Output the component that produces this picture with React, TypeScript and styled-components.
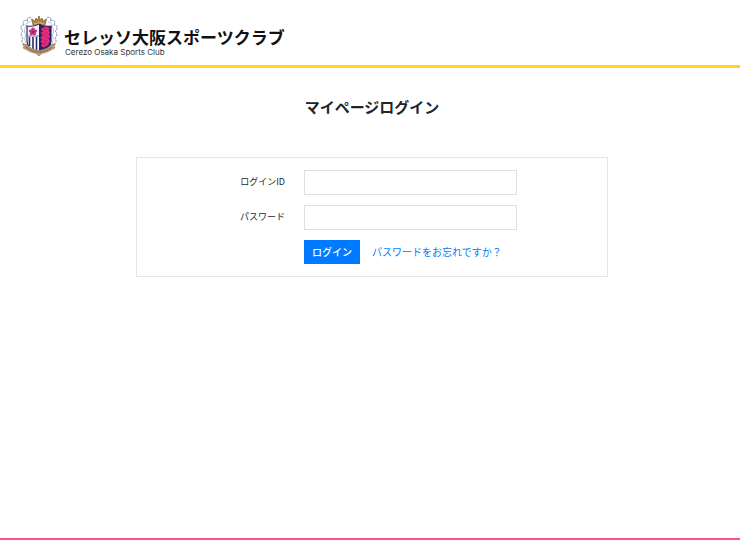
import React from "react";
import styled, { createGlobalStyle } from "styled-components";

const GlobalStyle = createGlobalStyle`
  *, *::before, *::after { box-sizing: border-box; }
  body {
    margin: 0;
    background: #fff;
    color: #212529;
    font-family: "Noto Sans CJK JP", "Liberation Sans", sans-serif;
    font-size: 10px;
    line-height: 16px;
  }
`;

const Page = styled.div`
  display: flex;
  flex-direction: column;
  min-height: 100vh;
`;

const Header = styled.header`
  padding: 15px 20px 8px;
  border-bottom: 3px solid #ffd71a;
`;

const Brand = styled.a`
  display: inline-flex;
  align-items: center;
  gap: 6px;
  color: #111;
  text-decoration: none;
  vertical-align: top;
`;

const BrandText = styled.span`
  display: flex;
  flex-direction: column;
  padding-top: 12px;
`;

const BrandName = styled.span`
  font-size: 17px;
  font-weight: 700;
  line-height: 20px;
`;

const BrandSub = styled.span`
  padding-left: 1px;
  font-family: Inter, "Liberation Sans", sans-serif;
  font-size: 8px;
  line-height: 10px;
  color: #333;
`;

const Main = styled.main`
  flex: 1;
  padding: 27px 18% 0;
  padding-left: calc(18% + 3px);
  padding-right: calc(18% - 1px);
`;

const Title = styled.h1`
  margin: 0 0 38px;
  font-size: 15px;
  font-weight: 700;
  line-height: 24px;
  text-align: center;
`;

const Card = styled.form`
  display: flex;
  flex-direction: column;
  gap: 10px;
  padding: 12px 0;
  border: 1px solid #e6e6e6;
`;

const Row = styled.div`
  display: grid;
  grid-template-columns: 148fr 213fr 71fr;
  column-gap: 19px;
  align-items: center;
`;

const Label = styled.label`
  padding-bottom: 2px;
  font-size: 9px;
  line-height: 14px;
  text-align: right;
`;

const Input = styled.input`
  width: 100%;
  min-width: 0;
  height: 25px;
  padding: 4px 8px;
  border: 1px solid #dce0e5;
  border-radius: 0;
  background: #fff;
  color: inherit;
  font: inherit;
`;

const Actions = styled.div`
  grid-column: 2 / -1;
  display: flex;
  align-items: center;
  gap: 12px;
`;

const Submit = styled.button`
  height: 24px;
  padding: 0 8px;
  border: 0;
  border-radius: 0;
  background: #007bff;
  color: #fff;
  font: inherit;
  font-weight: 500;
  cursor: pointer;
`;

const Link = styled.a`
  color: #007bff;
  text-decoration: none;
`;

const Footer = styled.footer`
  border-top: 2px solid #ff508c;
`;

const Crest = () => (
  <svg width="38" height="42" viewBox="0 0 38 42" role="img" aria-label="セレッソ大阪">
    <g fill="none" stroke="#7d7ba8" strokeWidth="0.9">
      <path d="M11 3C8 1 6 4 8 6C4 4 2 7 4 10C0 10 0 14 3 16C0 18 1 22 3 23C1 26 2 28 4 29" strokeDasharray="2.6 0.8" />
      <path d="M27 3C30 1 32 4 30 6C34 4 36 7 34 10C38 10 38 14 35 16C38 18 37 22 35 23C37 26 36 28 34 29" strokeDasharray="2.6 0.8" />
      <path d="M10 7C7 7 5 10 6 12C4 14 4 18 6 20C4 23 5 26 6 28M28 7C31 7 33 10 32 12C34 14 34 18 32 20C34 23 33 26 32 28" stroke="#b4b3cd" />
    </g>
    <path d="M7 11Q13 12 19 9Q25 12 31 11V26C31 33 26 36 19 38C12 36 7 33 7 26Z" fill="#f4f1fa" stroke="#29286b" strokeWidth="1.2" />
    <path d="M19 9Q25 12 31 11V26C31 33 26 36 19 38Z" fill="#29206b" />
    <path d="M8 20.800H19V37C12 35 8 32 8 26Z" fill="#fff" />
    <path d="M8 21H19" stroke="#29286b" strokeWidth="0.7" />
    <path d="M9.500 22V31M13 22V34.500M16.500 22V36" stroke="#29286b" strokeWidth="1.6" />
    <g fill="#c72f80">
      <circle cx="13" cy="14.3" r="1.7" />
      <circle cx="15.4" cy="16.1" r="1.7" />
      <circle cx="14.5" cy="18.600" r="1.7" />
      <circle cx="11.5" cy="18.600" r="1.7" />
      <circle cx="10.6" cy="16.1" r="1.7" />
      <circle cx="13" cy="16.9" r="1.3" fill="#8c246e" />
    </g>
    <path d="M22 13L25 11.500L28 12L30 13.500L28.500 15.500L30 17L29 19L30 22L28.500 23.500L30 26L28 30L24 32.500L21 31L22.500 28L20.500 27L22 24.500L20.300 22.500L22.500 20.500L20.500 17.500L23.500 17L21 15Z" fill="#e62c78" />
    <path d="M24 14.500L26.500 14M22.500 19L25 21M24 25L27 26.500M27 17L25.500 19M27.500 21L26 23M23 29L26 29" stroke="#7a2067" strokeWidth="0.6" />
    <path d="M13 10L11.500 4L15 6L16 3L18 5L19 1L20 5L22 3L23 6L26.500 4L25 10Q19 7.500 13 10Z" fill="#b8863b" stroke="#664c36" strokeWidth="0.6" />
    <path d="M14 9Q19 6.500 24 9" fill="none" stroke="#e3be73" strokeWidth="0.8" />
    <circle cx="19" cy="2" r="1" fill="#b8863b" />
    <path d="M2.500 29L6 29Q10 34 19 35.500Q28 34 32 29L35.500 29L34 31L35 33L31 35Q27 38 22 38.500L19 41L16 38.500Q11 38 7 35L3 33L4 31Z" fill="#b99a6b" stroke="#8a7458" strokeWidth="0.5" />
    <path d="M6 32Q12 37 19 37Q26 37 32 32" fill="none" stroke="#4a3f4f" strokeWidth="1" strokeDasharray="1.1 0.8" />
  </svg>
);

export default function App() {
  return (
    <>
      <GlobalStyle />
      <Page>
        <Header>
          <Brand href="#">
            <Crest />
            <BrandText>
              <BrandName>セレッソ大阪スポーツクラブ</BrandName>
              <BrandSub>Cerezo Osaka Sports Club</BrandSub>
            </BrandText>
          </Brand>
        </Header>
        <Main>
          <Title>マイページログイン</Title>
          <Card onSubmit={(event) => event.preventDefault()}>
            <Row>
              <Label htmlFor="login-id">ログインID</Label>
              <Input id="login-id" type="text" autoComplete="username" />
            </Row>
            <Row>
              <Label htmlFor="password">パスワード</Label>
              <Input id="password" type="password" autoComplete="current-password" />
            </Row>
            <Row>
              <Actions>
                <Submit type="submit">ログイン</Submit>
                <Link href="#">パスワードをお忘れですか？</Link>
              </Actions>
            </Row>
          </Card>
        </Main>
        <Footer />
      </Page>
    </>
  );
}
